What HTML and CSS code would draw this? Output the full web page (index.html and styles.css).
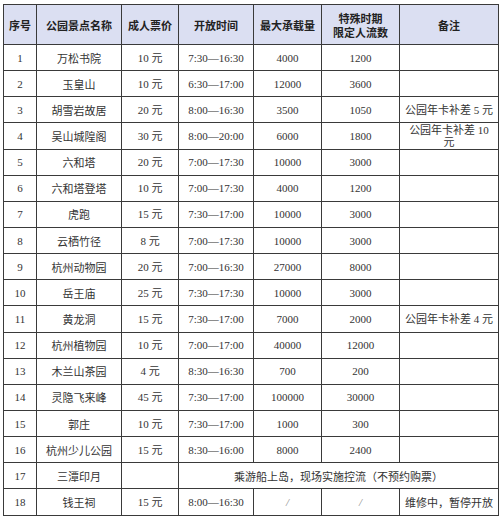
FILE: index.html
```html
<!DOCTYPE html>
<html lang="zh-CN">
<head>
<meta charset="utf-8">
<title>杭州公园景点开放信息</title>
<link rel="stylesheet" href="styles.css">
</head>
<body>
<div class="sheet">
<table class="grid">
<colgroup>
<col class="c-no"><col class="c-name"><col class="c-price"><col class="c-time"><col class="c-max"><col class="c-limit"><col class="c-note">
</colgroup>
<thead>
<tr><th>序号</th><th>公园景点名称</th><th>成人票价</th><th>开放时间</th><th>最大承载量</th><th>特殊时期<br>限定人流数</th><th>备注</th></tr>
</thead>
<tbody>
<tr><td>1</td><td class="cn">万松书院</td><td>10 元</td><td>7:30—16:30</td><td>4000</td><td>1200</td><td></td></tr>
<tr><td>2</td><td class="cn">玉皇山</td><td>10 元</td><td>6:30—17:00</td><td>12000</td><td>3600</td><td></td></tr>
<tr><td>3</td><td class="cn">胡雪岩故居</td><td>20 元</td><td>8:00—16:30</td><td>3500</td><td>1050</td><td class="note">公园年卡补差 5 元</td></tr>
<tr><td>4</td><td class="cn">吴山城隍阁</td><td>30 元</td><td>8:00—20:00</td><td>6000</td><td>1800</td><td class="note">公园年卡补差 10 元</td></tr>
<tr><td>5</td><td class="cn">六和塔</td><td>20 元</td><td>7:00—17:30</td><td>10000</td><td>3000</td><td></td></tr>
<tr><td>6</td><td class="cn">六和塔登塔</td><td>10 元</td><td>7:00—17:30</td><td>4000</td><td>1200</td><td></td></tr>
<tr><td>7</td><td class="cn">虎跑</td><td>15 元</td><td>7:30—17:00</td><td>10000</td><td>3000</td><td></td></tr>
<tr><td>8</td><td class="cn">云栖竹径</td><td>8 元</td><td>7:00—17:30</td><td>10000</td><td>3000</td><td></td></tr>
<tr><td>9</td><td class="cn">杭州动物园</td><td>20 元</td><td>7:00—16:30</td><td>27000</td><td>8000</td><td></td></tr>
<tr><td>10</td><td class="cn">岳王庙</td><td>25 元</td><td>7:30—17:30</td><td>10000</td><td>3000</td><td></td></tr>
<tr><td>11</td><td class="cn">黄龙洞</td><td>15 元</td><td>7:30—17:00</td><td>7000</td><td>2000</td><td class="note">公园年卡补差 4 元</td></tr>
<tr><td>12</td><td class="cn">杭州植物园</td><td>10 元</td><td>7:00—17:00</td><td>40000</td><td>12000</td><td></td></tr>
<tr><td>13</td><td class="cn">木兰山茶园</td><td>4 元</td><td>8:30—16:30</td><td>700</td><td>200</td><td></td></tr>
<tr><td>14</td><td class="cn">灵隐飞来峰</td><td>45 元</td><td>7:30—17:00</td><td>100000</td><td>30000</td><td></td></tr>
<tr><td>15</td><td class="cn">郭庄</td><td>10 元</td><td>7:30—17:00</td><td>1000</td><td>300</td><td></td></tr>
<tr><td>16</td><td class="cn">杭州少儿公园</td><td>15 元</td><td>8:30—16:00</td><td>8000</td><td>2400</td><td></td></tr>
<tr><td>17</td><td class="cn">三潭印月</td><td></td><td colspan="4" class="cn">乘游船上岛<span class="dot">，</span>现场实施控流（不预约购票）</td></tr>
<tr><td>18</td><td class="cn">钱王祠</td><td>15 元</td><td>8:00—16:30</td><td class="slash">/</td><td class="slash">/</td><td class="cn">维修中<span class="dot">，</span>暂停开放</td></tr>
</tbody>
</table>
</div>
</body>
</html>
```
FILE: styles.css
```css
html, body {
  margin: 0;
  background: #ffffff;
}

.sheet {
  padding: 4px 2px 0 3px;
}

.grid {
  border-collapse: collapse;
  table-layout: fixed;
  width: 495px;
  font-family: "Liberation Serif", "Noto Sans CJK SC", serif;
  font-size: 11px;
  color: #333333;
}

.c-no { width: 33px; }
.c-name { width: 85px; }
.c-price { width: 57px; }
.c-time { width: 75px; }
.c-max { width: 68px; }
.c-limit { width: 78px; }
.c-note { width: 99px; }

.grid th,
.grid td {
  border: 1px solid #3a3a3a;
  text-align: center;
  vertical-align: middle;
  padding: 0 3px;
}

.grid thead th {
  height: 39px;
  background: #dbdff2;
  font-family: "Noto Sans CJK SC", sans-serif;
  font-weight: 700;
  font-size: 11px;
  line-height: 14px;
  color: #222222;
}

.grid tbody td {
  height: 25.15px;
  line-height: 12px;
}

.grid .cn {
  font-family: "Noto Sans CJK SC", sans-serif;
  color: #333333;
}

.grid .note {
  font-family: "Liberation Serif", "Noto Sans CJK SC", serif;
}

.grid .slash {
  color: #888888;
  font-style: italic;
}

.dot {
  font-family: "Noto Sans CJK TC", sans-serif;
}
```
